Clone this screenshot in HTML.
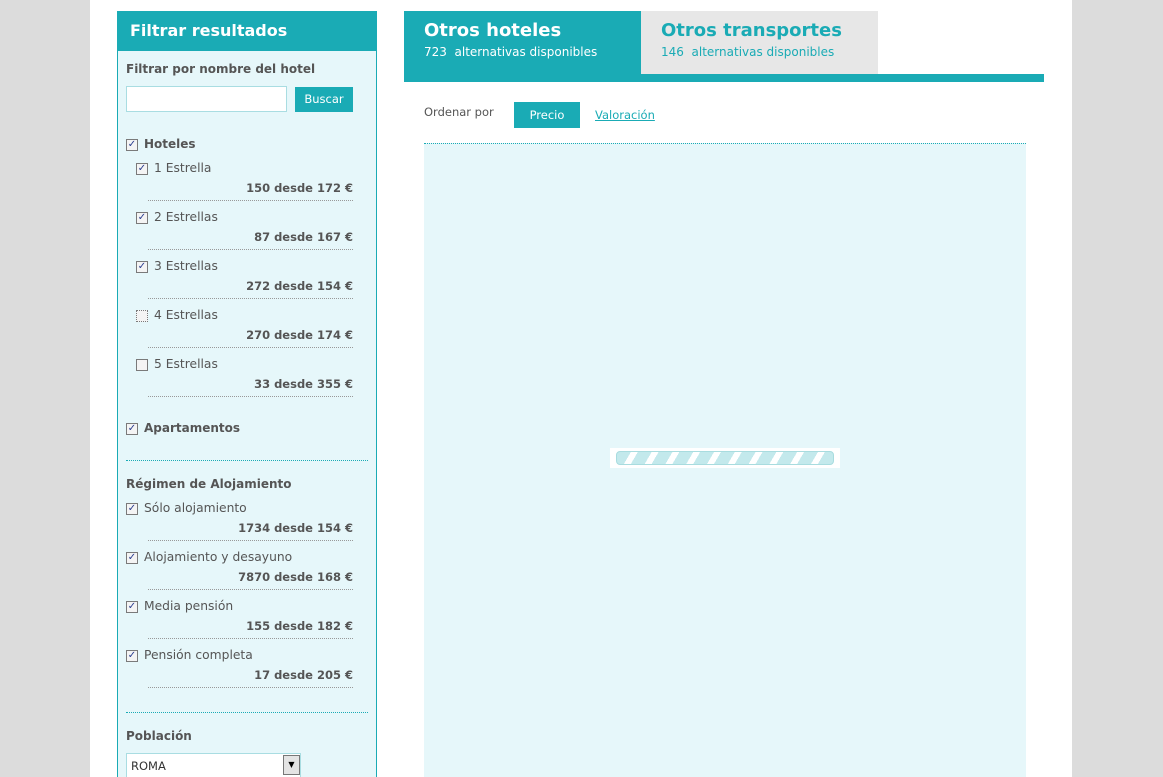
<!DOCTYPE html>
<html><head><meta charset="utf-8"><style>
*{margin:0;padding:0;box-sizing:border-box}
html,body{width:1163px;height:777px;overflow:hidden}
body{background:#dcdcdc;font-family:"DejaVu Sans","Liberation Sans",sans-serif;color:#555;position:relative}
.a{position:absolute}
#page{left:90px;top:0;width:982px;height:777px;background:#fff}
#side{left:117px;top:11px;width:260px;height:780px;background:#e6f7fa;border:1px solid #1aabb5}
#sh{left:117px;top:11px;width:260px;height:40px;background:#1aabb5;color:#fff;font-size:16px;font-weight:bold;padding:10px 0 0 13px}
.b{font-weight:bold;font-size:12px;color:#555}
.t{font-size:12.3px;color:#555}
.cb{width:12px;height:12px;border:1px solid #7a7a7a;background:#f4f4f4;font-size:10px;line-height:10px;text-align:center;color:#2a3d8f;font-weight:bold}
.pr{left:148px;width:205px;text-align:right;font-weight:bold;font-size:11.5px;border-bottom:1px dotted #999;line-height:14px}
.sep{left:126px;width:242px;border-top:1px dotted #1aabb5}
</style></head><body>
<div id="page" class="a"></div>
<div id="side" class="a"></div>
<div id="sh" class="a">Filtrar resultados</div>
<div class="a b" style="left:126px;top:62px">Filtrar por nombre del hotel</div>
<div class="a" style="left:126px;top:86px;width:161px;height:26px;background:#fff;border:1px solid #a9dde2"></div>
<div class="a" style="left:295px;top:87px;width:58px;height:25px;background:#1aabb5;color:#fff;font-size:11.5px;text-align:center;line-height:24px">Buscar</div>

<div class="a cb" style="left:126px;top:139px">✓</div><div class="a b" style="left:144px;top:137px">Hoteles</div>

<div class="a cb" style="left:136px;top:163px">✓</div><div class="a t" style="left:154px;top:161px">1 Estrella</div>
<div class="a pr" style="top:181px;height:20px">150 desde 172 €</div>
<div class="a cb" style="left:136px;top:212px">✓</div><div class="a t" style="left:154px;top:210px">2 Estrellas</div>
<div class="a pr" style="top:230px;height:20px">87 desde 167 €</div>
<div class="a cb" style="left:136px;top:261px">✓</div><div class="a t" style="left:154px;top:259px">3 Estrellas</div>
<div class="a pr" style="top:279px;height:20px">272 desde 154 €</div>
<div class="a cb" style="left:136px;top:310px;border-style:dotted"></div><div class="a t" style="left:154px;top:308px">4 Estrellas</div>
<div class="a pr" style="top:328px;height:20px">270 desde 174 €</div>
<div class="a cb" style="left:136px;top:359px"></div><div class="a t" style="left:154px;top:357px">5 Estrellas</div>
<div class="a pr" style="top:377px;height:20px">33 desde 355 €</div>

<div class="a cb" style="left:126px;top:423px">✓</div><div class="a b" style="left:144px;top:421px">Apartamentos</div>
<div class="a sep" style="top:460px"></div>
<div class="a b" style="left:126px;top:477px">Régimen de Alojamiento</div>
<div class="a cb" style="left:126px;top:503px">✓</div><div class="a t" style="left:144px;top:501px">Sólo alojamiento</div>
<div class="a pr" style="top:521px;height:20px">1734 desde 154 €</div>
<div class="a cb" style="left:126px;top:552px">✓</div><div class="a t" style="left:144px;top:550px">Alojamiento y desayuno</div>
<div class="a pr" style="top:570px;height:20px">7870 desde 168 €</div>
<div class="a cb" style="left:126px;top:601px">✓</div><div class="a t" style="left:144px;top:599px">Media pensión</div>
<div class="a pr" style="top:619px;height:20px">155 desde 182 €</div>
<div class="a cb" style="left:126px;top:650px">✓</div><div class="a t" style="left:144px;top:648px">Pensión completa</div>
<div class="a pr" style="top:668px;height:20px">17 desde 205 €</div>
<div class="a sep" style="top:712px"></div>
<div class="a b" style="left:126px;top:729px">Población</div>
<div class="a" style="left:126px;top:753px;width:175px;height:26px;background:#fff;border:1px solid #a9dde2;font-size:11.5px;color:#333;padding:5px 0 0 4px">ROMA</div>
<div class="a" style="left:283px;top:755px;width:17px;height:20px;background:#e4e4e4;border:1px solid #777;font-size:8px;text-align:center;line-height:18px;color:#000">▼</div>

<div class="a" style="left:404px;top:11px;width:237px;height:63px;background:#1aabb5"></div>
<div class="a" style="left:641px;top:11px;width:237px;height:63px;background:#e7e7e7"></div>
<div class="a" style="left:404px;top:74px;width:640px;height:8px;background:#1aabb5"></div>
<div class="a" style="left:424px;top:20px;color:#fff;font-size:18px;font-weight:bold">Otros hoteles</div>
<div class="a" style="left:424px;top:45px;color:#fff;font-size:12px">723&nbsp; alternativas disponibles</div>
<div class="a" style="left:661px;top:20px;color:#1aabb5;font-size:18px;font-weight:bold">Otros transportes</div>
<div class="a" style="left:661px;top:45px;color:#1aabb5;font-size:12px">146&nbsp; alternativas disponibles</div>

<div class="a t" style="left:424px;top:105px;font-size:11.5px">Ordenar por</div>
<div class="a" style="left:514px;top:102px;width:66px;height:26px;background:#1aabb5;color:#fff;font-size:11.5px;text-align:center;line-height:26px">Precio</div>
<div class="a" style="left:595px;top:108px;color:#1aabb5;font-size:11.5px;text-decoration:underline">Valoración</div>
<div class="a" style="left:424px;top:143px;width:602px;height:634px;background:#e6f7fa;border-top:1px dotted #1aabb5"></div>
<div class="a" style="left:610px;top:448px;width:230px;height:20px;background:#fff"></div>
<div class="a" style="left:616px;top:451px;width:218px;height:14px;border-radius:4px;border:1px solid #a8dcdf;background:repeating-linear-gradient(120deg,#c3e9ec 0 12px,#fff 12px 18px)"></div>
</body></html>
